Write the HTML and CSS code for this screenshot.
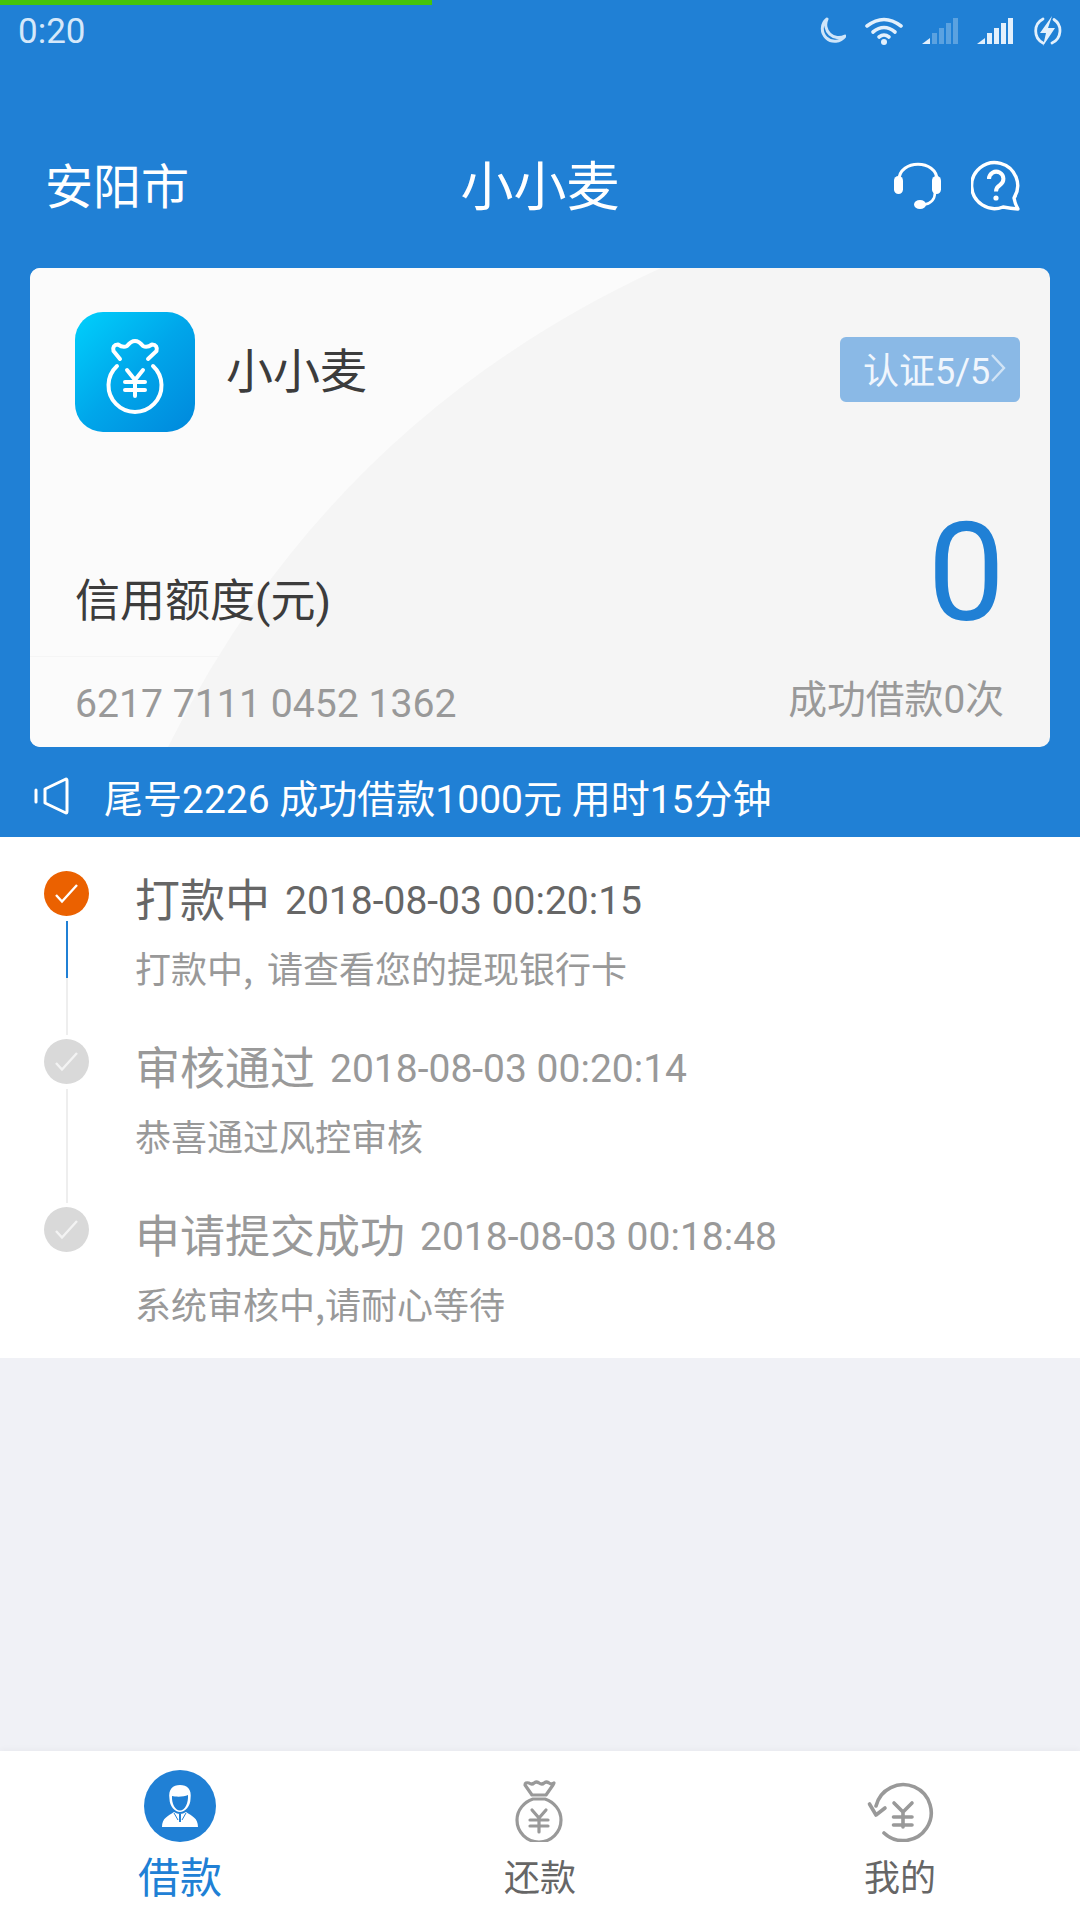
FILE: index.html
```html
<!DOCTYPE html>
<html>
<head>
  <meta charset="UTF-8">
  <title>小小麦</title>
  <link rel="stylesheet" href="styles.css">
</head>
<body>
  <div class="screen">
    <div class="page-progress"></div>

    <!-- Zone bleue : statut, titre, carte, annonce -->
    <header class="hero">
      <div class="status-bar">
        <span class="clock">0:20</span>
        <div class="status-icons">
          <svg class="st-moon" width="28" height="28" viewBox="0 0 28 28"><path d="M9 2 A12.500 12.500 0 1 0 27 19 A13 13 0 0 1 9 2Z" fill="none" stroke="#cfe5f9" stroke-width="3" stroke-linejoin="round"/></svg>
          <svg class="st-wifi" width="38" height="28" viewBox="0 0 38 28"><g fill="none" stroke="#e3f0fc" stroke-width="3.600" stroke-linecap="round"><path d="M2 9 Q19 -4 36 9"/><path d="M8 15 Q19 6 30 15"/><path d="M14 20 Q19 16 24 20"/></g><circle cx="19" cy="25" r="3" fill="#e3f0fc"/></svg>
          <svg width="38" height="26" viewBox="0 0 38 26"><polygon points="0,26 8,20 8,26" fill="#e3f0fc"/><g fill="#e3f0fc" opacity="0.3"><rect x="10" y="15" width="5" height="11"/><rect x="17" y="10" width="5" height="16"/><rect x="24" y="5" width="5" height="21"/><rect x="31" y="0" width="5" height="26"/></g></svg>
          <svg width="38" height="26" viewBox="0 0 38 26"><g fill="#e3f0fc"><polygon points="0,26 8,20 8,26"/><rect x="10" y="15" width="5" height="11"/><rect x="17" y="10" width="5" height="16"/><rect x="24" y="5" width="5" height="21"/><rect x="31" y="0" width="5" height="26"/></g></svg>
          <svg width="30" height="30" viewBox="0 0 30 30"><g fill="none" stroke="#e3f0fc" stroke-width="2.800" stroke-linecap="round"><path d="M11 3 A13.500 13.500 0 0 0 11 27"/><path d="M22 3.500 A13.500 13.500 0 0 1 20 27"/></g><polygon points="20,0 8,17 14,17 11,30 23,12 16,12" fill="#e3f0fc"/></svg>
        </div>
      </div>

      <div class="top-bar">
        <span class="city">安阳市</span>
        <h1 class="app-title">小小麦</h1>
        <div class="top-actions">
          <svg width="48" height="48" viewBox="0 0 48 48"><path d="M5 18 C5 -3 43 -3 43 18" fill="none" stroke="#fff" stroke-width="3"/><rect x="0" y="14" width="9" height="18" rx="4.500" fill="#fff"/><rect x="38" y="14" width="9" height="18" rx="4.500" fill="#fff"/><path d="M41 30 C41 38 36 42 29 43" fill="none" stroke="#fff" stroke-width="2.500"/><ellipse cx="26" cy="42.500" rx="6" ry="4.500" fill="#fff"/></svg>
          <svg width="50" height="52" viewBox="0 0 50 52"><path d="M43 38 A23 23 0 1 0 32 47 Q40 48.500 47 49 Q44 44 43 38Z" fill="none" stroke="#fff" stroke-width="3.400" stroke-linejoin="round"/><path d="M18 19 a7.200 7.200 0 1 1 11 6 q-4 2.500 -4 6.500" fill="none" stroke="#fff" stroke-width="4"/><circle cx="25" cy="38" r="2.600" fill="#fff"/></svg>
        </div>
      </div>

      <section class="card">
        <svg class="card-sheen" width="1020" height="479" viewBox="0 0 1020 479"><path d="M631 0 Q300 152 138 479 L0 479 L0 0Z" fill="#fbfbfb"/></svg>
        <div class="card-top">
          <div class="app-icon">
            <svg width="120" height="120" viewBox="0 0 120 120"><g fill="none" stroke="#fff" stroke-width="4" stroke-linecap="round" stroke-linejoin="round"><path d="M45 47 L38.500 39 Q37 33 43 32.500 Q48 36 52 34 Q56 29 60 29 Q64 29 68 34 Q72 36 77 32.500 Q83 33 81.500 39 L73 47"/><path d="M42 54 A26.500 26.500 0 1 0 78 54"/><path d="M52 58 L60 68 L68 58 M60 68 V84 M50 70 H70 M50 78 H70"/></g></svg>
          </div>
          <span class="card-name">小小麦</span>
          <a class="auth-badge">认证5/5<svg width="16" height="30" viewBox="0 0 16 30"><path d="M2 2 L14 15 L2 28" fill="none" stroke="#fff" stroke-opacity="0.6" stroke-width="2.400"/></svg></a>
        </div>
        <div class="quota-row">
          <span class="quota-label">信用额度(元)</span>
          <span class="quota-value">0</span>
        </div>
        <div class="card-foot">
          <span class="card-number">6217 7111 0452 1362</span>
          <span class="loan-count">成功借款0次</span>
        </div>
      </section>

      <div class="notice">
        <svg width="36" height="38" viewBox="0 0 36 38"><g fill="none" stroke="#fff" stroke-width="3" stroke-linejoin="round" stroke-linecap="round"><path d="M2 13 V25"/><path d="M11 12 L32 2 Q33 2 33 4 V34 Q33 36 32 36 L11 26Z"/></g></svg>
        <span>尾号2226 成功借款1000元 用时15分钟</span>
      </div>
    </header>

    <!-- Suivi de la demande -->
    <section class="timeline">
      <div class="step step-active">
        <div class="step-marker">
          <svg class="step-dot" width="45" height="45" viewBox="0 0 45 45"><circle cx="22.500" cy="22.500" r="22.500" fill="#eb6100"/><path d="M12 24 L18 30.500 L33 14" fill="none" stroke="#fff" stroke-width="2.400"/></svg>
          <div class="step-line line-progress"></div>
        </div>
        <div class="step-body">
          <div class="step-title"><b>打款中</b><time>2018-08-03 00:20:15</time></div>
          <p class="step-desc">打款中, 请查看您的提现银行卡</p>
        </div>
      </div>
      <div class="step">
        <div class="step-marker">
          <svg class="step-dot" width="45" height="45" viewBox="0 0 45 45"><circle cx="22.500" cy="22.500" r="22.500" fill="#d9d9d9"/><path d="M12 24 L18 30.500 L33 14" fill="none" stroke="#f3f3f3" stroke-width="2.400"/></svg>
          <div class="step-line"></div>
        </div>
        <div class="step-body">
          <div class="step-title"><b>审核通过</b><time>2018-08-03 00:20:14</time></div>
          <p class="step-desc">恭喜通过风控审核</p>
        </div>
      </div>
      <div class="step step-last">
        <div class="step-marker">
          <svg class="step-dot" width="45" height="45" viewBox="0 0 45 45"><circle cx="22.500" cy="22.500" r="22.500" fill="#d9d9d9"/><path d="M12 24 L18 30.500 L33 14" fill="none" stroke="#f3f3f3" stroke-width="2.400"/></svg>
        </div>
        <div class="step-body">
          <div class="step-title"><b>申请提交成功</b><time>2018-08-03 00:18:48</time></div>
          <p class="step-desc">系统审核中,请耐心等待</p>
        </div>
      </div>
    </section>

    <div class="filler"></div>

    <!-- Navigation -->
    <nav class="tab-bar">
      <div class="tab tab-active">
        <svg width="72" height="72" viewBox="0 0 72 72">
          <circle cx="36" cy="36" r="36" fill="#2080d5"/>
          <path d="M25.500 29 C24 19 29 15 36 15 C43 15 48 19 46.500 29 C46.500 36 41 42 36 42 C31 42 25.500 36 25.500 29Z" fill="#fff"/>
          <path d="M28 26 C32 27 40 27 44 25 C44.500 33 41 40.500 36 40.500 C31 40.500 27.500 33 28 26Z" fill="#2080d5"/>
          <path d="M18 57 C18 48 24 46 30 42 Q36 46 42 42 C48 46 54 48 54 57Z" fill="#fff"/>
          <path d="M36 44 V52" fill="none" stroke="#2080d5" stroke-width="2"/>
          <path d="M30 43 L34 50 M42 43 L38 50" fill="none" stroke="#2080d5" stroke-width="1"/>
        </svg>
        <span>借款</span>
      </div>
      <div class="tab">
        <svg width="56" height="72" viewBox="0 0 56 72"><g fill="none" stroke="#999" stroke-width="3.200" stroke-linejoin="round" stroke-linecap="round"><path d="M20 25 L13 15 Q13 12 17 13 Q20 15 22 13 Q25 11 27 13 Q30 15 32 13 Q35 11 37 13 Q40 15 42 13 L41 15 L34 25Z"/><path d="M21 29 H33 C42 32 49 40 49 50 A22 22 0 0 1 5 50 C5 40 12 32 21 29Z"/><path d="M20 40 L27 48 L34 40 M27 48 V62 M18 50 H36 M18 56 H36"/></g></svg>
        <span>还款</span>
      </div>
      <div class="tab">
        <svg width="72" height="72" viewBox="0 0 72 72"><g fill="none" stroke="#999" stroke-width="3.600" stroke-linejoin="round" stroke-linecap="round"><path d="M20 63 A28 28 0 1 0 12 36"/><path d="M5.500 34 L12 45 L21 38"/><path d="M30 33 L39 42 L48 33 M39 42 V57 M29.500 47 H48 M29.500 55 H48"/></g></svg>
        <span>我的</span>
      </div>
    </nav>
  </div>
</body>
</html>
```

FILE: styles.css
```css
/* Page */
body {
  margin: 0;
  font-family: Roboto, "Noto Sans CJK SC", sans-serif;
  background-color: #f0f1f6;
}
.screen {
  width: 1080px;
  height: 1920px;
  display: flex;
  flex-direction: column;
  position: relative;
  overflow: hidden;
}
.page-progress {
  position: absolute;
  top: 0;
  left: 0;
  width: 432px;
  height: 5px;
  background-color: #45c40a;
}

/* Zone bleue */
.hero {
  background-color: #2080d5;
  color: #fff;
  height: 837px;
  padding: 0 30px;
  box-sizing: border-box;
}
.status-bar {
  height: 62px;
  margin: 0 -30px;
  padding: 0 18px;
  display: flex;
  justify-content: space-between;
  align-items: center;
}
.clock {
  font-size: 35px;
  color: #d5e8fa;
}
.status-icons {
  display: flex;
  align-items: center;
  gap: 17px;
}
.st-moon {
  margin-right: 2px;
}
.st-wifi {
  margin-right: 2px;
}
.top-bar {
  margin-top: 71px;
  margin-bottom: 35px;
  height: 100px;
  display: grid;
  grid-template-columns: 1fr auto 1fr;
  align-items: center;
}
.city {
  font-size: 48px;
  padding-left: 15px;
}
.app-title {
  margin: 0;
  font-size: 53px;
  font-weight: 400;
}
.top-actions {
  display: flex;
  justify-content: flex-end;
  align-items: center;
  gap: 29px;
  margin-top: 6px;
  padding-right: 29px;
}

/* Carte */
.card {
  position: relative;
  height: 479px;
  border-radius: 10px;
  background-color: #f5f5f5;
  overflow: hidden;
}
.card-sheen {
  position: absolute;
  top: 0;
  left: 0;
}
.card-top,
.quota-row,
.card-foot {
  position: relative;
}
.card-top {
  display: flex;
  align-items: center;
  padding: 44px 30px 0 45px;
}
.app-icon {
  width: 120px;
  height: 120px;
  border-radius: 28px;
  background: linear-gradient(135deg, #00d0fc 0%, #00a6ea 50%, #0088dc 100%);
}
.card-name {
  margin-left: 31px;
  margin-bottom: 9px;
  font-size: 47px;
  color: #3c3c3c;
}
.auth-badge {
  margin-left: auto;
  margin-bottom: 5px;
  width: 180px;
  height: 65px;
  padding: 0 0 3px 23px;
  box-sizing: border-box;
  display: flex;
  align-items: center;
  border-radius: 6px;
  background-color: #8ab9e6;
  color: #f0f6fd;
  font-size: 36px;
}
.quota-row {
  height: 224px;
  padding: 0 45px;
  display: flex;
  justify-content: space-between;
  align-items: flex-end;
  border-bottom: 1px solid #f5f5f5;
}
.quota-label {
  font-size: 45px;
  line-height: 60px;
  margin-bottom: 24px;
  color: #3c3c3c;
}
.quota-value {
  font-size: 138px;
  line-height: 138px;
  margin-bottom: 14px;
  color: #2080d5;
}
.card-foot {
  height: 90px;
  padding: 0 46px 0 45px;
  display: flex;
  justify-content: space-between;
  align-items: center;
  color: #999;
}
.card-number {
  font-size: 39.2px;
  margin-top: 4px;
}
.loan-count {
  font-size: 38.8px;
  margin-bottom: 12px;
}
.notice {
  height: 90px;
  box-sizing: border-box;
  padding-top: 8px;
  display: flex;
  align-items: center;
  gap: 34px;
  margin-left: 4px;
  font-size: 39px;
}

/* Etapes */
.timeline {
  height: 521px;
  box-sizing: border-box;
  padding-top: 34px;
  background-color: #fff;
  color: #999;
}
.step {
  height: 168px;
  display: flex;
}
.step-last {
  height: 150px;
}
.step-marker {
  width: 45px;
  margin-left: 44px;
  display: flex;
  flex-direction: column;
  align-items: center;
}
.step-dot {
  flex: none;
}
.step-line {
  width: 2px;
  height: 114px;
  margin-top: 5px;
  background-color: #eeeeee;
}
.line-progress {
  background: linear-gradient(#2080d5 50%, #eeeeee 50%);
}
.step-body {
  margin-left: 46px;
}
.step-title {
  display: flex;
  align-items: center;
  height: 60px;
}
.step-title b {
  font-size: 45px;
  font-weight: 400;
  margin-right: 15px;
  margin-bottom: 8px;
}
.step-title time {
  font-size: 39px;
}
.step-active .step-title {
  color: #666;
}
.step-desc {
  margin: 11px 0 0;
  font-family: "Noto Sans CJK SC", Roboto, sans-serif;
  font-size: 36px;
  line-height: 50px;
  word-spacing: 6px;
}

.filler {
  flex: 1;
}

/* Navigation */
.tab-bar {
  height: 169px;
  display: grid;
  grid-template-columns: repeat(3, 1fr);
  background-color: #fff;
  box-shadow: 0 -2px 6px rgba(0, 0, 0, 0.03);
}
.tab {
  padding-top: 19px;
  display: flex;
  flex-direction: column;
  align-items: center;
  font-size: 36px;
  line-height: 70px;
  color: #666;
}
.tab span {
  margin-top: 2px;
}
.tab-active {
  font-size: 42px;
  color: #2080d5;
}
```
